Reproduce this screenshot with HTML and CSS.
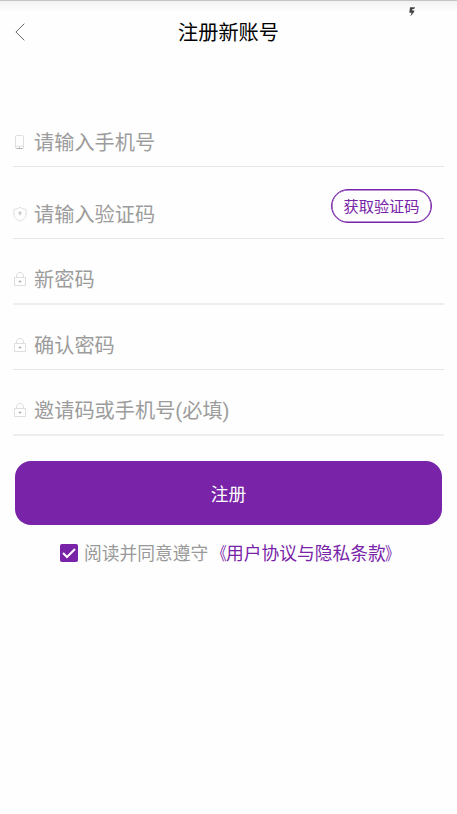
FILE: index.html
```html
<!DOCTYPE html>
<html lang="zh-CN">
<head>
<meta charset="utf-8">
<title>注册新账号</title>
<link rel="stylesheet" href="styles.css">
</head>
<body>
<svg class="bolt" viewBox="0 0 6 10"><path d="M1 .2H6L5.2 2H3.4L3.2 3.4H5.6L4.6 5.8L1.2 9.6L2.6 5.8H.3Z"/></svg>
<header class="header">
  <svg class="back" viewBox="0 0 10 18"><path d="M9.3 .7L.9 9L9.3 17.3"/></svg>
  <h1 class="title">注册新账号</h1>
</header>
<main class="form">
  <div class="field">
    <svg class="icon" viewBox="0 0 14 16"><rect x="2.5" y="1.5" width="8" height="13" rx="1.2"/><path d="M2.5 12.2H10.5"/><path class="dark" d="M3.5 14.5H9.5M6 13.3H7"/></svg>
    <span class="hint">请输入手机号</span>
  </div>
  <div class="field code">
    <svg class="icon" viewBox="0 0 14 16"><path d="M7 1.2C5.3 2.6 3.2 3.1 1 3.3V8C1 11.8 3.5 13.8 7 15C10.5 13.8 13 11.8 13 8V3.3C10.8 3.1 8.7 2.6 7 1.2Z"/><path class="dark" d="M5.3 7H8.7M7 5.3V9.3"/></svg>
    <span class="hint">请输入验证码</span>
    <button class="get-code">获取验证码</button>
  </div>
  <div class="field thick">
    <svg class="icon" viewBox="0 0 14 16"><path class="lock" d="M1.5 6.5H12.5V14.5H1.5ZM3.5 6.5V5C3.5 .2 10.5 .2 10.5 5V6.5"/><path class="dark" d="M5.6 10.5H8.4M7 9.1V11.9"/></svg>
    <span class="hint">新密码</span>
  </div>
  <div class="field">
    <svg class="icon" viewBox="0 0 14 16"><path class="lock" d="M1.5 6.5H12.5V14.5H1.5ZM3.5 6.5V5C3.5 .2 10.5 .2 10.5 5V6.5"/><path class="dark" d="M5.6 10.5H8.4M7 9.1V11.9"/></svg>
    <span class="hint">确认密码</span>
  </div>
  <div class="field thick">
    <svg class="icon" viewBox="0 0 14 16"><path class="lock" d="M1.5 6.5H12.5V14.5H1.5ZM3.5 6.5V5C3.5 .2 10.5 .2 10.5 5V6.5"/><path class="dark" d="M5.6 10.5H8.4M7 9.1V11.9"/></svg>
    <span class="hint">邀请码或手机号(必填)</span>
  </div>
</main>
<button class="submit">注册</button>
<div class="agree">
  <svg class="check" viewBox="0 0 18 18"><rect width="18" height="18" rx="2"/><path d="M3 9L7 13L15 5"/></svg>
  <span class="agree-text">阅读并同意遵守</span><a class="terms"><span class="open">《</span>用户协议与隐私条款<span class="close">》</span></a>
</div>
</body>
</html>
```
FILE: styles.css
```css
* { box-sizing: border-box; }

body {
  margin: 0;
  min-height: 814px;
  background: linear-gradient(#c4c4c4 0, #c4c4c4 1px, #f3f3f3 1px, #fefefe 12px) #fefefe;
  background-size: 100% 814px;
  background-repeat: no-repeat;
  font-family: Roboto, "Noto Sans CJK SC", sans-serif;
}

button {
  display: block;
  padding: 0;
  font-family: inherit;
}

.bolt {
  position: absolute;
  left: 409px;
  top: 7px;
  width: 6px;
  height: 10px;
  fill: #444;
}

.header {
  display: grid;
  grid-template-columns: 34px 1fr 34px;
  align-items: center;
  height: 63px;
}

.back {
  width: 10px;
  height: 18px;
  margin-left: 15px;
  fill: none;
  stroke: #666;
  stroke-width: 1;
}

.title {
  margin: 0;
  padding-top: 2px;
  text-align: center;
  font-size: 20.2px;
  font-weight: 400;
  line-height: 30px;
  color: #000;
}

.form {
  margin: 54px 13px 0;
}

.field {
  display: flex;
  align-items: center;
  height: 65.5px;
  padding-top: 16px;
  border-bottom: 1px solid #e6e6e6;
}

.field:first-child {
  height: 50px;
  padding-top: 0;
}

.field.code {
  height: 72px;
  padding-top: 22px;
}

.field.thick {
  height: 66px;
  border-bottom: 2px solid #eee;
}

.field.thick + .field { height: 65px; }

.icon {
  flex: none;
  width: 14px;
  height: 16px;
  margin-right: 7px;
  fill: none;
  stroke: #d6d6d6;
  stroke-width: 0.8;
}

.icon .dark { stroke: #aaa; }

.hint {
  padding-top: 2px;
  font-size: 20.2px;
  line-height: 30px;
  white-space: nowrap;
  color: #9c9c9c;
}

.get-code {
  width: 101px;
  height: 34px;
  margin: -16px 12px 0 auto;
  padding-bottom: 2px;
  border: 1px solid #7823a8;
  border-radius: 17px;
  box-shadow: inset 0 0 0 0.5px #7823a8;
  background: none;
  font-size: 15.2px;
  color: #7823a8;
}

.submit {
  width: 427px;
  height: 64px;
  margin: 25px 0 0 15px;
  padding-bottom: 1px;
  border: 0;
  border-radius: 16px;
  background: #7823a8;
  font-size: 17.7px;
  color: #fff;
}

.agree {
  display: flex;
  align-items: center;
  height: 26px;
  margin: 15px 0 0 60px;
  font-size: 17.75px;
  line-height: 26px;
  white-space: nowrap;
}

.check {
  width: 18px;
  height: 18px;
  margin-right: 6px;
  fill: #7823a8;
}

.check path {
  fill: none;
  stroke: #fff;
  stroke-width: 2;
}

.agree-text,
.terms { padding-top: 2px; }

.agree-text { color: #999; }

.terms { color: #7823a8; }

.open,
.close {
  display: inline-block;
}

.open { transform: translateX(1px) scaleX(0.8); transform-origin: right; }

.close { transform: translateX(-1px) scaleX(0.8); transform-origin: left; }
```
